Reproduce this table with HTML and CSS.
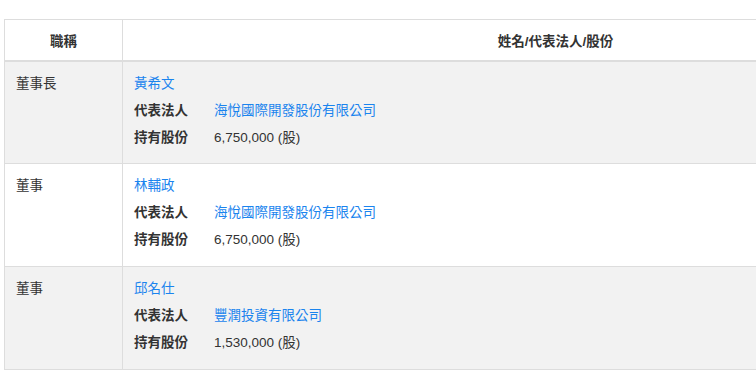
FILE: index.html
```html
<!DOCTYPE html>
<html lang="zh-Hant">
<head>
<meta charset="utf-8">
<link rel="stylesheet" href="styles.css">
</head>
<body>
<div class="wrap">
  <table class="board">
    <thead>
      <tr>
        <th class="col-title">職稱</th>
        <th class="col-info">姓名/代表法人/股份</th>
      </tr>
    </thead>
    <tbody>
      <tr class="shade">
        <td class="title">董事長</td>
        <td class="info">
          <div class="line"><a class="link" href="#">黃希文</a></div>
          <div class="line"><span class="label">代表法人</span><a class="link" href="#">海悅國際開發股份有限公司</a></div>
          <div class="line"><span class="label">持有股份</span><span class="val">6,750,000 (股)</span></div>
        </td>
      </tr>
      <tr>
        <td class="title">董事</td>
        <td class="info">
          <div class="line"><a class="link" href="#">林輔政</a></div>
          <div class="line"><span class="label">代表法人</span><a class="link" href="#">海悅國際開發股份有限公司</a></div>
          <div class="line"><span class="label">持有股份</span><span class="val">6,750,000 (股)</span></div>
        </td>
      </tr>
      <tr class="shade">
        <td class="title">董事</td>
        <td class="info">
          <div class="line"><a class="link" href="#">邱名仕</a></div>
          <div class="line"><span class="label">代表法人</span><a class="link" href="#">豐潤投資有限公司</a></div>
          <div class="line"><span class="label">持有股份</span><span class="val">1,530,000 (股)</span></div>
        </td>
      </tr>
    </tbody>
  </table>
</div>
</body>
</html>
```

FILE: styles.css
```css
html, body {
  margin: 0;
  padding: 0;
  background: #fff;
}
body {
  font-family: "Liberation Sans", "Noto Sans CJK TC", sans-serif;
  font-size: 13.5px;
  color: #333;
  overflow: hidden;
}
.wrap {
  width: 756px;
  height: 371px;
  overflow: hidden;
  padding: 19px 0 0 4px;
  box-sizing: border-box;
}
.board {
  border-collapse: collapse;
  width: 985px;
  table-layout: fixed;
}
.board th,
.board td {
  border: 1px solid #dddddd;
  vertical-align: top;
}
.board th {
  height: 41px;
  box-sizing: border-box;
  padding: 0;
  text-align: center;
  vertical-align: middle;
  font-weight: 600;
  color: #333;
  border-bottom: 2px solid #dddddd;
}
.col-title {
  width: 118px;
}
.shade td {
  background: #f2f2f2;
}
.title {
  padding: 13px 11px 0;
  line-height: 18px;
}
.info {
  padding: 8px 11px 13px;
}
tbody tr:first-child .info {
  padding-bottom: 12px;
}
.line {
  display: flex;
  line-height: 27px;
}
.label {
  width: 80px;
  flex: none;
  font-weight: 600;
  color: #333;
}
.link {
  color: #1a84ee;
  text-decoration: none;
}
.val {
  color: #333;
}
```
